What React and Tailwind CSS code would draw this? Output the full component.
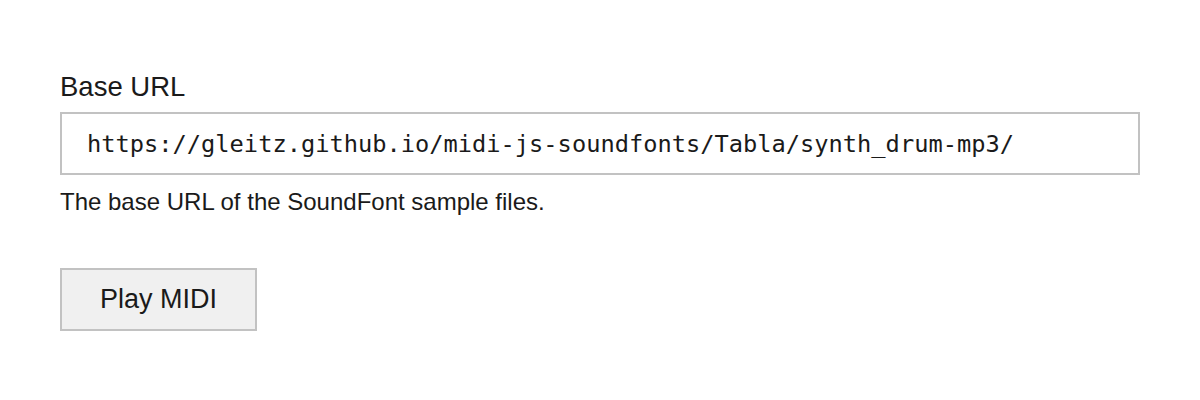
import React, { useState } from 'react';

const DEFAULT_URL = 'https://gleitz.github.io/midi-js-soundfonts/Tabla/synth_drum-mp3/';

const App = () => {
  const [baseUrl, setBaseUrl] = useState(DEFAULT_URL);

  return (
    <div className="min-h-[400px] bg-white px-[60px] pt-[71px] font-['Liberation_Sans',Arial,sans-serif] text-[#1a1a1a]">
      <label htmlFor="base-url" className="block text-[27.5px] leading-[32px]">
        Base URL
      </label>
      <input
        id="base-url"
        type="text"
        value={baseUrl}
        onChange={(e) => setBaseUrl(e.target.value)}
        className="mt-[9px] block h-[63px] w-[1080px] border-2 border-[#c2c2c2] bg-white px-[25px] font-['DejaVu_Sans_Mono',monospace] text-[23.7px] text-[#1a1a1a] outline-none"
      />
      <p className="mt-[13px] text-[24px] leading-[28px]">
        The base URL of the SoundFont sample files.
      </p>
      <button
        type="button"
        className="mt-[52px] block h-[63px] w-[197px] border-2 border-[#c2c2c2] bg-[#f0f0f0] text-[27px] text-[#1a1a1a]"
      >
        Play MIDI
      </button>
    </div>
  );
};

export default App;
